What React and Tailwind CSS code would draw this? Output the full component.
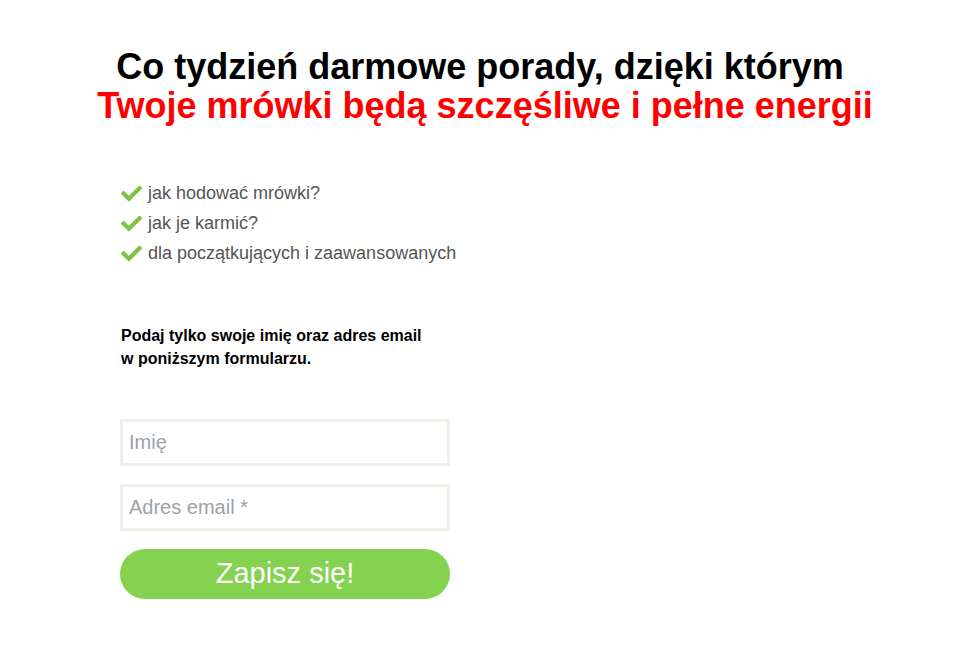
import React from "react";

const items = ["jak hodować mrówki?", "jak je karmić?", "dla początkujących i zaawansowanych"];

function Check() {
  return (
    <svg viewBox="0 0 512 512" className="w-[21px] h-[21px] shrink-0" fill="#7cc444">
      <path d="M173.9 439.4l-166.4-166.4c-10-10-10-26.2 0-36.2l36.2-36.2c10-10 26.2-10 36.2 0L192 312.7 432.1 72.6c10-10 26.2-10 36.2 0l36.2 36.2c10 10 10 26.2 0 36.2l-294.4 294.4c-10 10-26.2 10-36.2 0z" />
    </svg>
  );
}

export default function App() {
  return (
    <div className="w-[977px] h-[651px] bg-white font-['Liberation_Sans',Arial,sans-serif]">
      <h1 className="pt-[47px] mr-[7px] text-center font-bold text-[36px] leading-[39px]">
        <span className="block text-black">Co tydzień darmowe porady, dzięki którym&nbsp;</span>
        <span className="block text-[#ff0000]">Twoje mrówki będą szczęśliwe i pełne energii</span>
      </h1>

      <ul className="mt-[53px] ml-[121px] flex flex-col">
        {items.map((t) => (
          <li key={t} className="flex items-center gap-[6px] h-[30px] text-[18px] text-[#555555]">
            <Check />
            <span>{t}</span>
          </li>
        ))}
      </ul>

      <p className="mt-[56px] ml-[121px] text-[16px] leading-[23px] font-bold text-black">
        Podaj tylko swoje imię oraz adres email
        <br />w poniższym formularzu.
      </p>

      <form className="mt-[49px] ml-[120px] w-[330px] flex flex-col">
        <input
          type="text"
          placeholder="Imię"
          className="h-[47px] border-[3px] border-[#efefe7] px-[6px] text-[20px] outline-none placeholder:text-[#9ca3a8]"
        />
        <input
          type="email"
          placeholder="Adres email *"
          className="mt-[18px] h-[47px] border-[3px] border-[#efefe7] px-[6px] text-[20px] outline-none placeholder:text-[#9ca3a8]"
        />
        <button
          type="button"
          className="mt-[18px] h-[50px] rounded-full bg-[#84d24f] text-white text-[29px]"
        >
          Zapisz się!
        </button>
      </form>
    </div>
  );
}
